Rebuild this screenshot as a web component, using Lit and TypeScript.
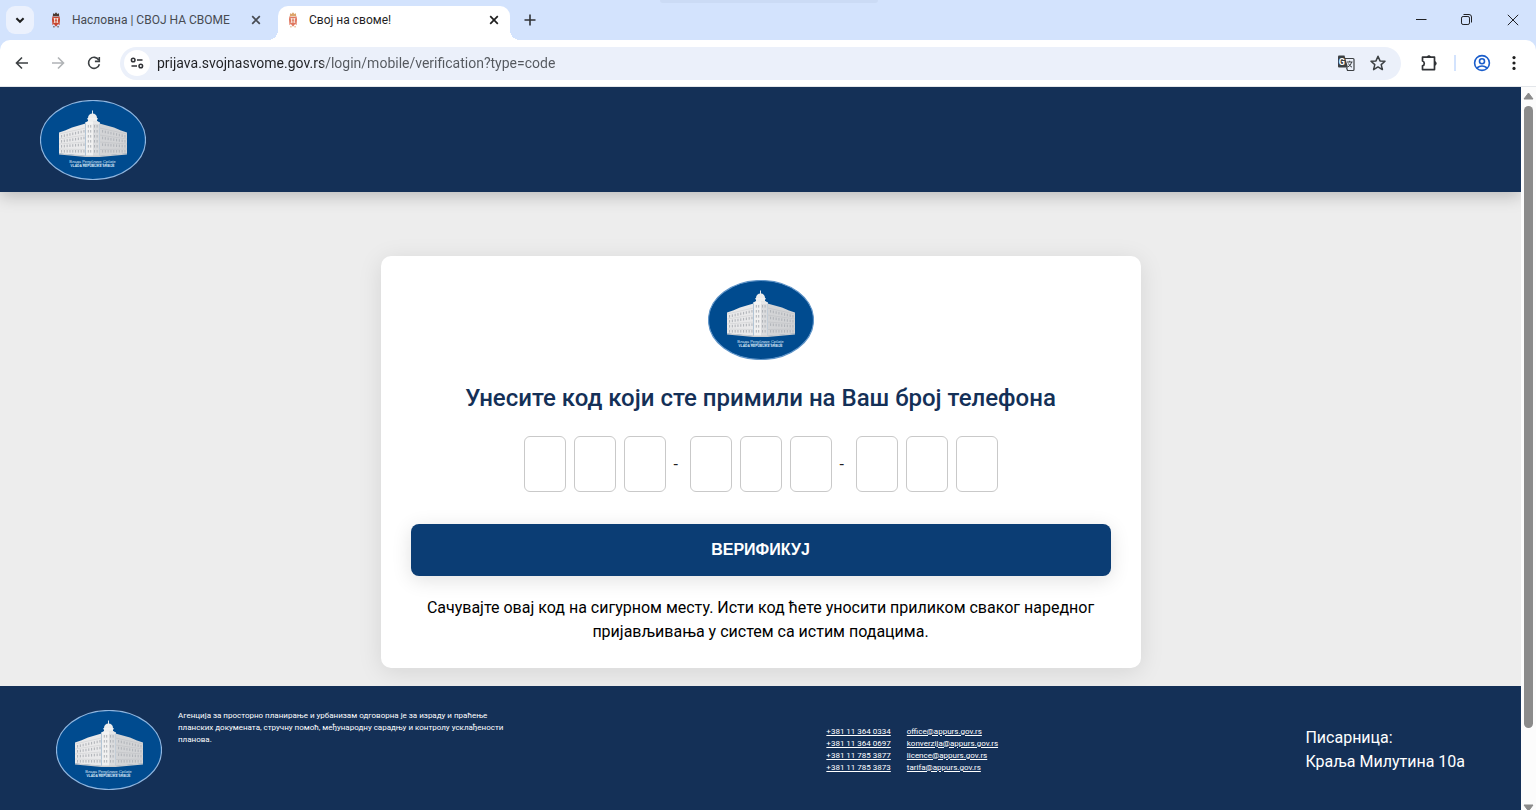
import { LitElement, html, svg, css } from "lit";
import { customElement, property } from "lit/decorators.js";

@customElement("gov-logo")
class GovLogo extends LitElement {
  @property() ring = "#8fb6e0";

  static styles = css`
    :host { display: block; width: 106px; height: 80px; flex: none; }
    svg { display: block; width: 100%; height: 100%; }
    text { font-family: "Liberation Sans", Arial, sans-serif; font-size: 4px; fill: #dbe8f7; text-anchor: middle; }
    .latin { font-size: 3.3px; font-weight: 700; }
  `;

  private wing(side: number) {
    const cells = [];
    for (let row = 0; row < 4; row++) {
      for (let col = 0; col < 9; col++) {
        const t = col / 8;
        const y = 35 + row * 5 - (1 - row / 3) * t * 5;
        const x = side < 0 ? 21 + col * 2.8 : 84.4 - col * 2.8;
        cells.push(svg`<rect x=${x} y=${y} width="1.1" height="2.6" fill="#b3b6bb"/>`);
      }
    }
    return cells;
  }

  render() {
    const tower = [];
    for (let row = 0; row < 6; row++) {
      for (const x of [47.8, 50.2, 54, 56.6]) {
        tower.push(svg`<rect x=${x} y=${25 + row * 5} width="1" height="2.6" fill="#b0b3b8"/>`);
      }
    }
    return html`<svg viewBox="0 0 106 80" role="img" aria-label="Влада Републике Србије">
      <ellipse cx="53" cy="40" rx="52.5" ry="39.5" fill="#004b8f" stroke=${this.ring} stroke-width="1.2" />
      <path d="M19 32.5 L25 30.5 L32 27.5 L45.5 23.5 V56 L19 53.5 Z" fill="#e9e9ea" />
      <path d="M87 32.5 L81 30.5 L74 27.5 L59.5 23.5 V56 L87 53.5 Z" fill="#d3d4d6" />
      <path d="M19 34 L45.5 28 M19 39 L45.5 35 M19 44 L45.5 42 M19 49 L45.5 49.5" stroke="#c8cacd" stroke-width=".5" />
      <path d="M87 34 L59.5 28 M87 39 L59.5 35 M87 44 L59.5 42 M87 49 L59.5 49.5" stroke="#babcc0" stroke-width=".5" />
      ${this.wing(-1)} ${this.wing(1)}
      <path d="M45.5 22.5 L48 21 H57 L59.5 22.5 V56.5 H45.5 Z" fill="#f0f0f0" />
      <path d="M53 21 H57 L59.5 22.5 V56.5 H53 Z" fill="#dadbdd" />
      ${tower}
      <path d="M48 21.5 V18 C48 15 50 13.5 52.5 13.5 C55 13.5 57 15 57 18 V21.5 Z" fill="#eceded" />
      <path d="M52.5 10.5 V14 M47 18.8 H58 M45 23 H60" stroke="#f6f6f6" stroke-width=".9" />
      <path d="M19 53.2 L45.5 55.6 H59.5 L87 53.2 V54.6 L59.5 57 H45.5 L19 54.6 Z" fill="#c9cbce" />
      <text x="52.5" y="63.2">Влада Републике Србије</text>
      <path d="M42 64 H64" stroke="#dbe8f7" stroke-width=".4" />
      <text class="latin" x="52.5" y="67.2">VLADA REPUBLIKE SRBIJE</text>
    </svg>`;
  }
}

const crest = (robe: string, crown: string) => html`<svg class="crest" viewBox="0 0 16 18" aria-hidden="true">
  <path d="M4 4.6 Q8 6 12 4.6 L12.6 8 L12 15 L10.4 13.6 L8 16.6 L5.6 13.6 L4 15 L3.4 8 Z" fill=${robe} />
  <path d="M4.6 1.4 L6.4 2 L8 0 L9.6 2 L11.4 1.4 L11.6 4.8 H4.4 Z" fill=${crown} />
  <path d="M5.2 6.4 L8 7.4 L10.8 6.4 L10 10 L10.8 12.6 L8 11.6 L5.2 12.6 L6 10 Z" fill="#f6e6dc" />
  <path d="M7 8 H9 V10.4 L8 11.4 L7 10.4 Z" fill=${robe} />
  <path d="M4.6 16.8 H6.6 M9.4 16.8 H11.4" stroke=${crown} />
</svg>`;

const icon = (body: unknown, size = 20) =>
  html`<svg width=${size} height=${size} viewBox="0 0 20 20" fill="none" stroke="currentColor" aria-hidden="true">${body}</svg>`;

const closeIcon = icon(svg`<path d="M6.2 6.2 L13.8 13.8 M13.8 6.2 L6.2 13.8" stroke-width="1.7"/>`);

@customElement("browser-bar")
class BrowserBar extends LitElement {
  static styles = css`
    :host { display: block; flex: none; background: #d3e3fd; font-family: Roboto, "Noto Sans", sans-serif; color: #303236; }
    button { border: 0; padding: 0; background: none; color: inherit; font: inherit; display: flex; align-items: center; justify-content: center; }
    svg { display: block; flex: none; }
    .strip { display: flex; height: 40px; position: relative; }
    .peek { position: absolute; left: 43%; top: 0; width: 218px; height: 3px; border-radius: 0 0 4px 4px; background: #cbdbf5; }
    .search { width: 28px; height: 28px; margin: 6px 8px 0 6px; border-radius: 9px; background: #ebf1fd; color: #1f1f1f; }
    .tab { display: flex; align-items: center; width: 232px; box-sizing: border-box; height: 34px; margin-top: 6px; padding: 0 6px 6px 8px; font-size: 12px; }
    .tab button:first-of-type { flex: 1; justify-content: flex-start; gap: 9px; white-space: nowrap; }
    .crest { width: 14px; height: 16px; }
    .idle { color: #474b52; margin-right: 4px; padding: 0 8px 6px 7px; }
    .active { background: #fff; border-radius: 10px 10px 0 0; position: relative; color: #1f1f1f; }
    .active::before, .active::after { content: ""; position: absolute; bottom: 0; width: 10px; height: 10px; }
    .active::before { right: 100%; background: radial-gradient(circle at 0 0, transparent 10px, #fff 10px); }
    .active::after { left: 100%; background: radial-gradient(circle at 100% 0, transparent 10px, #fff 10px); }
    .plus { width: 40px; height: 40px; }
    .windows { display: flex; margin-left: auto; color: #202124; }
    .windows button { width: 46px; height: 40px; }
    .tools { display: flex; align-items: center; height: 47px; box-sizing: border-box; background: #fff; border-radius: 10px 10px 0 0; padding: 0 8px 0 4px; border-bottom: 1px solid #e3e6ea; }
    .nav { width: 36px; height: 36px; color: #3c4043; }
    .off { color: #b0b3b6; }
    .omni { display: flex; align-items: center; flex: 1; height: 33px; margin: 0 10px 0 8px; padding: 0 7px 0 4px; border-radius: 17px; background: #ebf0fa; }
    .site { width: 26px; height: 26px; border-radius: 50%; background: #fff; color: #303236; }
    .url { flex: 1; min-width: 0; border: 0; outline: 0; margin-left: 7px; padding: 0; height: 24px; font: 14px/24px Roboto, "Noto Sans", sans-serif; color: transparent; background: linear-gradient(90deg, #202124 166px, #54585e 166px) text; }
    .act { width: 32px; height: 32px; color: #3c4043; }
    .puzzle { width: 36px; height: 36px; color: #303236; }
    .rule { width: 2px; height: 16px; margin: 0 8px 0 7px; background: #d3e3fd; }
    .user { width: 36px; height: 36px; color: #1a5dcb; }
    .more { width: 28px; height: 36px; color: #1f1f1f; }
    .glyph { fill: #fff; stroke: none; font: 700 9px Roboto, sans-serif; }
    .dark { fill: #3c4043; stroke: none; }
  `;

  render() {
    return html`
      <div class="strip">
        <span class="peek"></span>
        <button class="search" aria-label="Претражи картице">${icon(svg`<path d="M6.4 8.2 L10 11.8 L13.6 8.2" stroke-width="2"/>`)}</button>
        <div class="tab idle">
          <button>${crest("#c8452f", "#4b3a32")}<span>Насловна | СВОЈ НА СВОМЕ</span></button>
          <button aria-label="Затвори">${closeIcon}</button>
        </div>
        <div class="tab active">
          <button>${crest("#e0775f", "#dca56a")}<span>Свој на своме!</span></button>
          <button aria-label="Затвори">${closeIcon}</button>
        </div>
        <button class="plus" aria-label="Нова картица">${icon(svg`<path d="M10 4.5 V15.5 M4.5 10 H15.5" stroke-width="1.6"/>`)}</button>
        <div class="windows">
          <button aria-label="Умањи">${icon(svg`<path d="M5 9.5 H15.5"/>`)}</button>
          <button aria-label="Врати">${icon(svg`<rect x="4.5" y="6.5" width="8" height="8" rx="1.6"/><path d="M6.5 4.5 H12 Q14.5 4.5 14.5 7 V12.5"/>`)}</button>
          <button aria-label="Затвори прозор">${icon(svg`<path d="M4.8 4.8 L15.2 15.2 M15.2 4.8 L4.8 15.2"/>`)}</button>
        </div>
      </div>
      <div class="tools">
        <button class="nav" aria-label="Назад">${icon(svg`<path d="M16 10 H4.8 M10 4.5 L4.5 10 L10 15.5" stroke-width="1.6"/>`)}</button>
        <button class="nav off" aria-label="Напред">${icon(svg`<path d="M4 10 H15.2 M10 4.5 L15.5 10 L10 15.5" stroke-width="1.6"/>`)}</button>
        <button class="nav" aria-label="Освежи">${icon(svg`<path d="M14.8 7 A5.5 5.5 0 1 0 15.4 11.2" stroke-width="1.6"/><path d="M15.3 4 V8.4 H10.9" stroke-width="1.6"/>`)}</button>
        <div class="omni">
          <button class="site" aria-label="Подаци о сајту">${icon(svg`<circle cx="6.2" cy="7" r="1.8" stroke-width="1.5"/><path d="M10 7 H15.5 M4.5 13 H10" stroke-width="1.6"/><circle cx="13.8" cy="13" r="1.8" stroke-width="1.5"/>`)}</button>
          <input class="url" aria-label="Адреса" spellcheck="false" value="prijava.svojnasvome.gov.rs/login/mobile/verification?type=code" />
          <button class="act" aria-label="Преведи">${icon(svg`<path d="M8.5 5.5 H17 Q18 5.5 18 6.5 V16.5 Q18 17.5 17 17.5 H11.5 L10.5 14.5" stroke-width="1.2"/><path class="dark" d="M3 2.5 H8.5 L12 14.5 H3 Q2 14.5 2 13.5 V3.5 Q2 2.5 3 2.5 Z"/><text class="glyph" x="2.8" y="11.6">G</text><path d="M11 9 H16.5 M13.7 7.8 V9 M15.7 9 Q15 12.5 11.8 14 M12.4 10.5 Q13.5 13 16 14.2"/>`)}</button>
          <button class="act" aria-label="Обележи">${icon(svg`<path d="M10 3.2 L12 7.9 L17 8.3 L13.2 11.6 L14.4 16.6 L10 13.9 L5.6 16.6 L6.8 11.6 L3 8.3 L8 7.9 Z" stroke-width="1.5" stroke-linejoin="round"/>`)}</button>
        </div>
        <button class="puzzle" aria-label="Додаци">${icon(svg`<path d="M3.5 4.2 H15.5 V16.6 H3.5 V12.8 A2.5 2.5 0 0 0 3.5 8 Z" stroke-width="1.7" stroke-linejoin="round"/><path d="M8 4 A2 2 0 0 1 11.8 4 Z M16 8.5 A2 2 0 0 1 16 12.3 Z" fill="currentColor" stroke-width=".6"/>`)}</button>
        <span class="rule"></span>
        <button class="user" aria-label="Профил">${icon(svg`<circle cx="10" cy="10" r="7.4" stroke-width="1.6"/><circle cx="10" cy="8.3" r="2.5" stroke-width="1.6"/><path d="M4.8 15 Q10 10.9 15.2 15" stroke-width="1.6"/>`)}</button>
        <button class="more" aria-label="Мени">${icon(svg`<g fill="currentColor" stroke="none"><circle cx="10" cy="4.6" r="1.6"/><circle cx="10" cy="10" r="1.6"/><circle cx="10" cy="15.4" r="1.6"/></g>`)}</button>
      </div>
    `;
  }
}

const PHONES = ["+381 11 364 0334", "+381 11 364 0697", "+381 11 785 3877", "+381 11 785 3873"];
const MAILS = ["office@appurs.gov.rs", "konverzija@appurs.gov.rs", "licence@appurs.gov.rs", "tarifa@appurs.gov.rs"];

@customElement("app-root")
class AppRoot extends LitElement {
  static styles = css`
    :host { display: flex; flex-direction: column; height: 100vh; overflow: hidden; font-family: Roboto, sans-serif; }
    .view { display: flex; flex: 1; min-height: 0; }
    .page { flex: 1; min-width: 0; overflow: hidden; background: #ededed; display: flex; flex-direction: column; }
    .top { flex: none; background: #143057; padding: 13px 40px 12px; box-shadow: 0 4px 16px rgba(0, 0, 0, 0.22); position: relative; }
    main { flex: none; padding: 64px 16px 18px; }
    .card { max-width: 760px; box-sizing: border-box; margin: 0 auto; padding: 24px 30px; border-radius: 10px; background: #fff; box-shadow: 0 4px 24px rgba(0, 0, 0, 0.1); display: flex; flex-direction: column; align-items: center; }
    h1 { margin: 20px 0; font-size: 24px; line-height: 36px; font-weight: 500; color: #143057; text-align: center; }
    .code { display: flex; align-items: center; gap: 8px; font-size: 16px; color: #222; }
    .code input { width: 42px; height: 56px; box-sizing: border-box; border: 1px solid #c9c9c9; border-radius: 6px; background: #fff; padding: 0; text-align: center; font: 24px Roboto, sans-serif; }
    .dash { width: 8px; }
    .verify { align-self: stretch; height: 52px; margin: 32px 0 20px; border: 0; border-radius: 8px; background: #0b3d74; color: #fff; font: 700 16px "Liberation Sans", Arial, sans-serif; box-shadow: 0 4px 20px rgba(0, 0, 0, 0.12); }
    .note { margin: 0; font-size: 16px; line-height: 24px; text-align: center; color: #000; }
    footer { flex: none; display: flex; align-items: center; justify-content: space-between; padding: 24px 56px; background: #143057; color: #fff; }
    .agency { display: flex; gap: 16px; }
    .agency p { margin: 0; width: 341px; font-size: 8px; line-height: 12px; }
    .contacts { display: grid; grid-template-columns: auto auto; column-gap: 16px; font-size: 8px; line-height: 12px; }
    .contacts a { color: inherit; }
    .office { margin: 0; font-size: 16px; line-height: 24px; font-style: normal; }
    .scroll { width: 15px; background: #fcfcfc; display: flex; flex-direction: column; align-items: center; }
    .scroll svg { display: block; flex: none; width: 15px; height: 19px; fill: #8b8b8b; }
    .thumb { width: 9px; height: 86%; border-radius: 5px; background: #8b8b8b; }
    .scroll .down { margin-top: auto; height: 7px; }
  `;

  private cells(start: number) {
    return [0, 1, 2].map((i) => html`<input type="text" inputmode="numeric" maxlength="1" aria-label=${`Цифра ${start + i}`} />`);
  }

  render() {
    return html`
      <browser-bar></browser-bar>
      <div class="view">
        <div class="page">
          <header class="top"><gov-logo></gov-logo></header>
          <main>
            <form class="card" @submit=${(e: Event) => e.preventDefault()}>
              <gov-logo ring="#5f94c8"></gov-logo>
              <h1>Унесите код који сте примили на Ваш број телефона</h1>
              <div class="code">
                ${this.cells(1)}<span class="dash">-</span>${this.cells(4)}<span class="dash">-</span>${this.cells(7)}
              </div>
              <button class="verify">ВЕРИФИКУЈ</button>
              <p class="note">Сачувајте овај код на сигурном месту. Исти код ћете уносити приликом сваког наредног пријављивања у систем са истим подацима.</p>
            </form>
          </main>
          <footer>
            <div class="agency">
              <gov-logo></gov-logo>
              <p>Агенција за просторно планирање и урбанизам одговорна је за израду и праћење планских докумената, стручну помоћ, међународну сарадњу и контролу усклађености планова.</p>
            </div>
            <div class="contacts">
              ${PHONES.map((phone, i) => html`<a href=${`tel:${phone.replaceAll(" ", "")}`}>${phone}</a><a href=${`mailto:${MAILS[i]}`}>${MAILS[i]}</a>`)}
            </div>
            <address class="office">Писарница:<br />Краља Милутина 10а</address>
          </footer>
        </div>
        <div class="scroll" aria-hidden="true">
          <svg viewBox="0 0 15 19"><path d="M7.5 6 L12 12 H3 Z" stroke="#8b8b8b" stroke-linejoin="round" /></svg>
          <div class="thumb"></div>
          <svg class="down" viewBox="0 0 15 7"><path d="M3 2 H12 L7.5 8 Z" stroke="#8b8b8b" stroke-linejoin="round" /></svg>
        </div>
      </div>
    `;
  }
}
